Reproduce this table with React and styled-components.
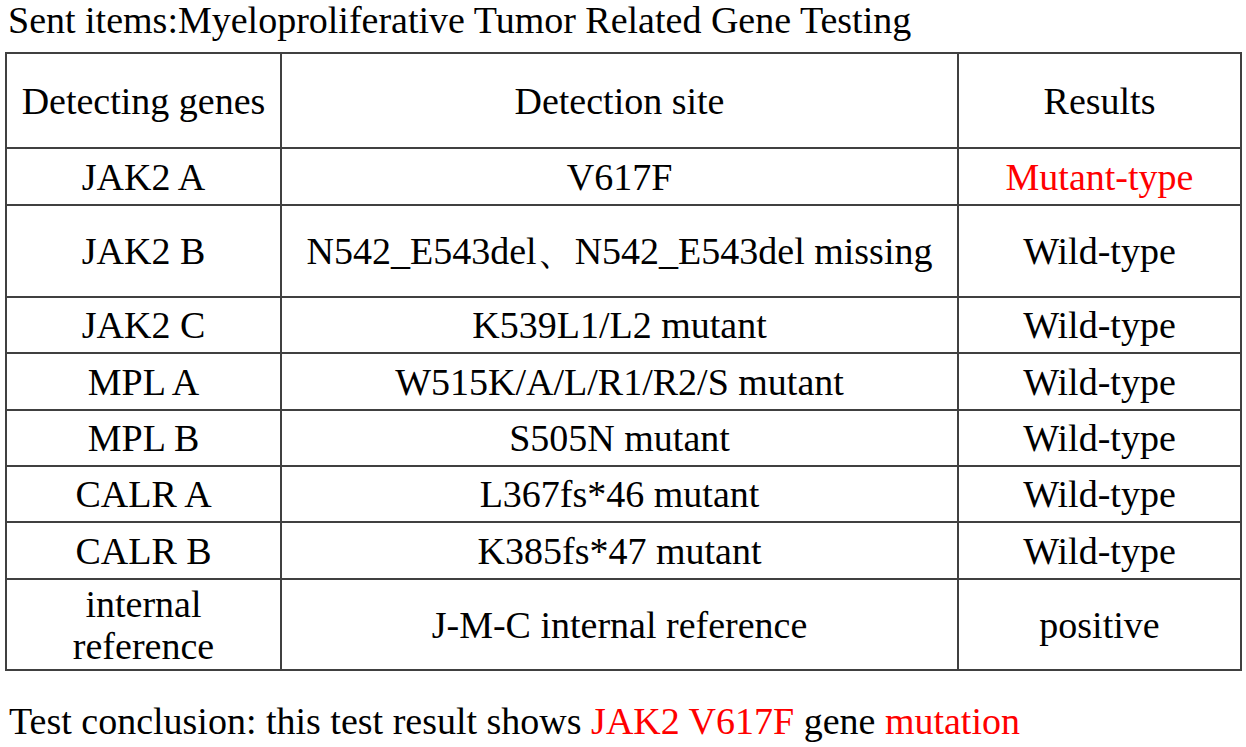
import React from "react";
import styled, { createGlobalStyle } from "styled-components";

const Global = createGlobalStyle`
  html, body { margin: 0; padding: 0; background: #fff; }
  body { font-family: "Liberation Serif", "Times New Roman", serif; color: #000; }
`;

const Page = styled.div`
  width: 1246px;
  height: 747px;
  padding: 0 6px 0 5px;
  box-sizing: border-box;
  overflow: hidden;
`;

const Title = styled.div`
  font-size: 38px;
  line-height: 40px;
  height: 52px;
  padding-left: 3px;
  white-space: nowrap;
`;

const Table = styled.table`
  width: 1235px;
  border-collapse: collapse;
  table-layout: fixed;
  font-size: 38px;
  line-height: 42px;
`;

const Cell = styled.td`
  border: 2px solid #404040;
  text-align: center;
  vertical-align: middle;
  padding: 0;
  height: ${(p) => p.$h}px;
  color: ${(p) => (p.$red ? "#ff0000" : "#000")};
`;

const Conclusion = styled.div`
  font-size: 38px;
  line-height: 40px;
  margin-top: 30px;
  padding-left: 4px;
  white-space: nowrap;
`;

const Red = styled.span`
  color: #ff0000;
`;

const rows = [
  { g: "JAK2 A", s: "V617F", r: "Mutant-type", red: true, h: 55 },
  { g: "JAK2 B", s: "N542_E543del、N542_E543del missing", r: "Wild-type", h: 90 },
  { g: "JAK2 C", s: "K539L1/L2 mutant", r: "Wild-type", h: 54 },
  { g: "MPL A", s: "W515K/A/L/R1/R2/S mutant", r: "Wild-type", h: 55 },
  { g: "MPL B", s: "S505N mutant", r: "Wild-type", h: 54 },
  { g: "CALR A", s: "L367fs*46 mutant", r: "Wild-type", h: 54 },
  { g: "CALR B", s: "K385fs*47 mutant", r: "Wild-type", h: 55 },
  { g: <>internal<br />reference</>, s: "J-M-C internal reference", r: "positive", h: 89 },
];

export default function App() {
  return (
    <Page>
      <Global />
      <Title>Sent items:Myeloproliferative Tumor Related Gene Testing</Title>
      <Table>
        <colgroup>
          <col style={{ width: 275 }} />
          <col style={{ width: 677 }} />
          <col style={{ width: 283 }} />
        </colgroup>
        <tbody>
          <tr>
            <Cell $h={93}>Detecting genes</Cell>
            <Cell $h={93}>Detection site</Cell>
            <Cell $h={93}>Results</Cell>
          </tr>
          {rows.map((row, i) => (
            <tr key={i}>
              <Cell $h={row.h}>{row.g}</Cell>
              <Cell $h={row.h}>{row.s}</Cell>
              <Cell $h={row.h} $red={row.red}>{row.r}</Cell>
            </tr>
          ))}
        </tbody>
      </Table>
      <Conclusion>
        Test conclusion: this test result shows <Red>JAK2 V617F</Red> gene <Red>mutation</Red>
      </Conclusion>
    </Page>
  );
}
